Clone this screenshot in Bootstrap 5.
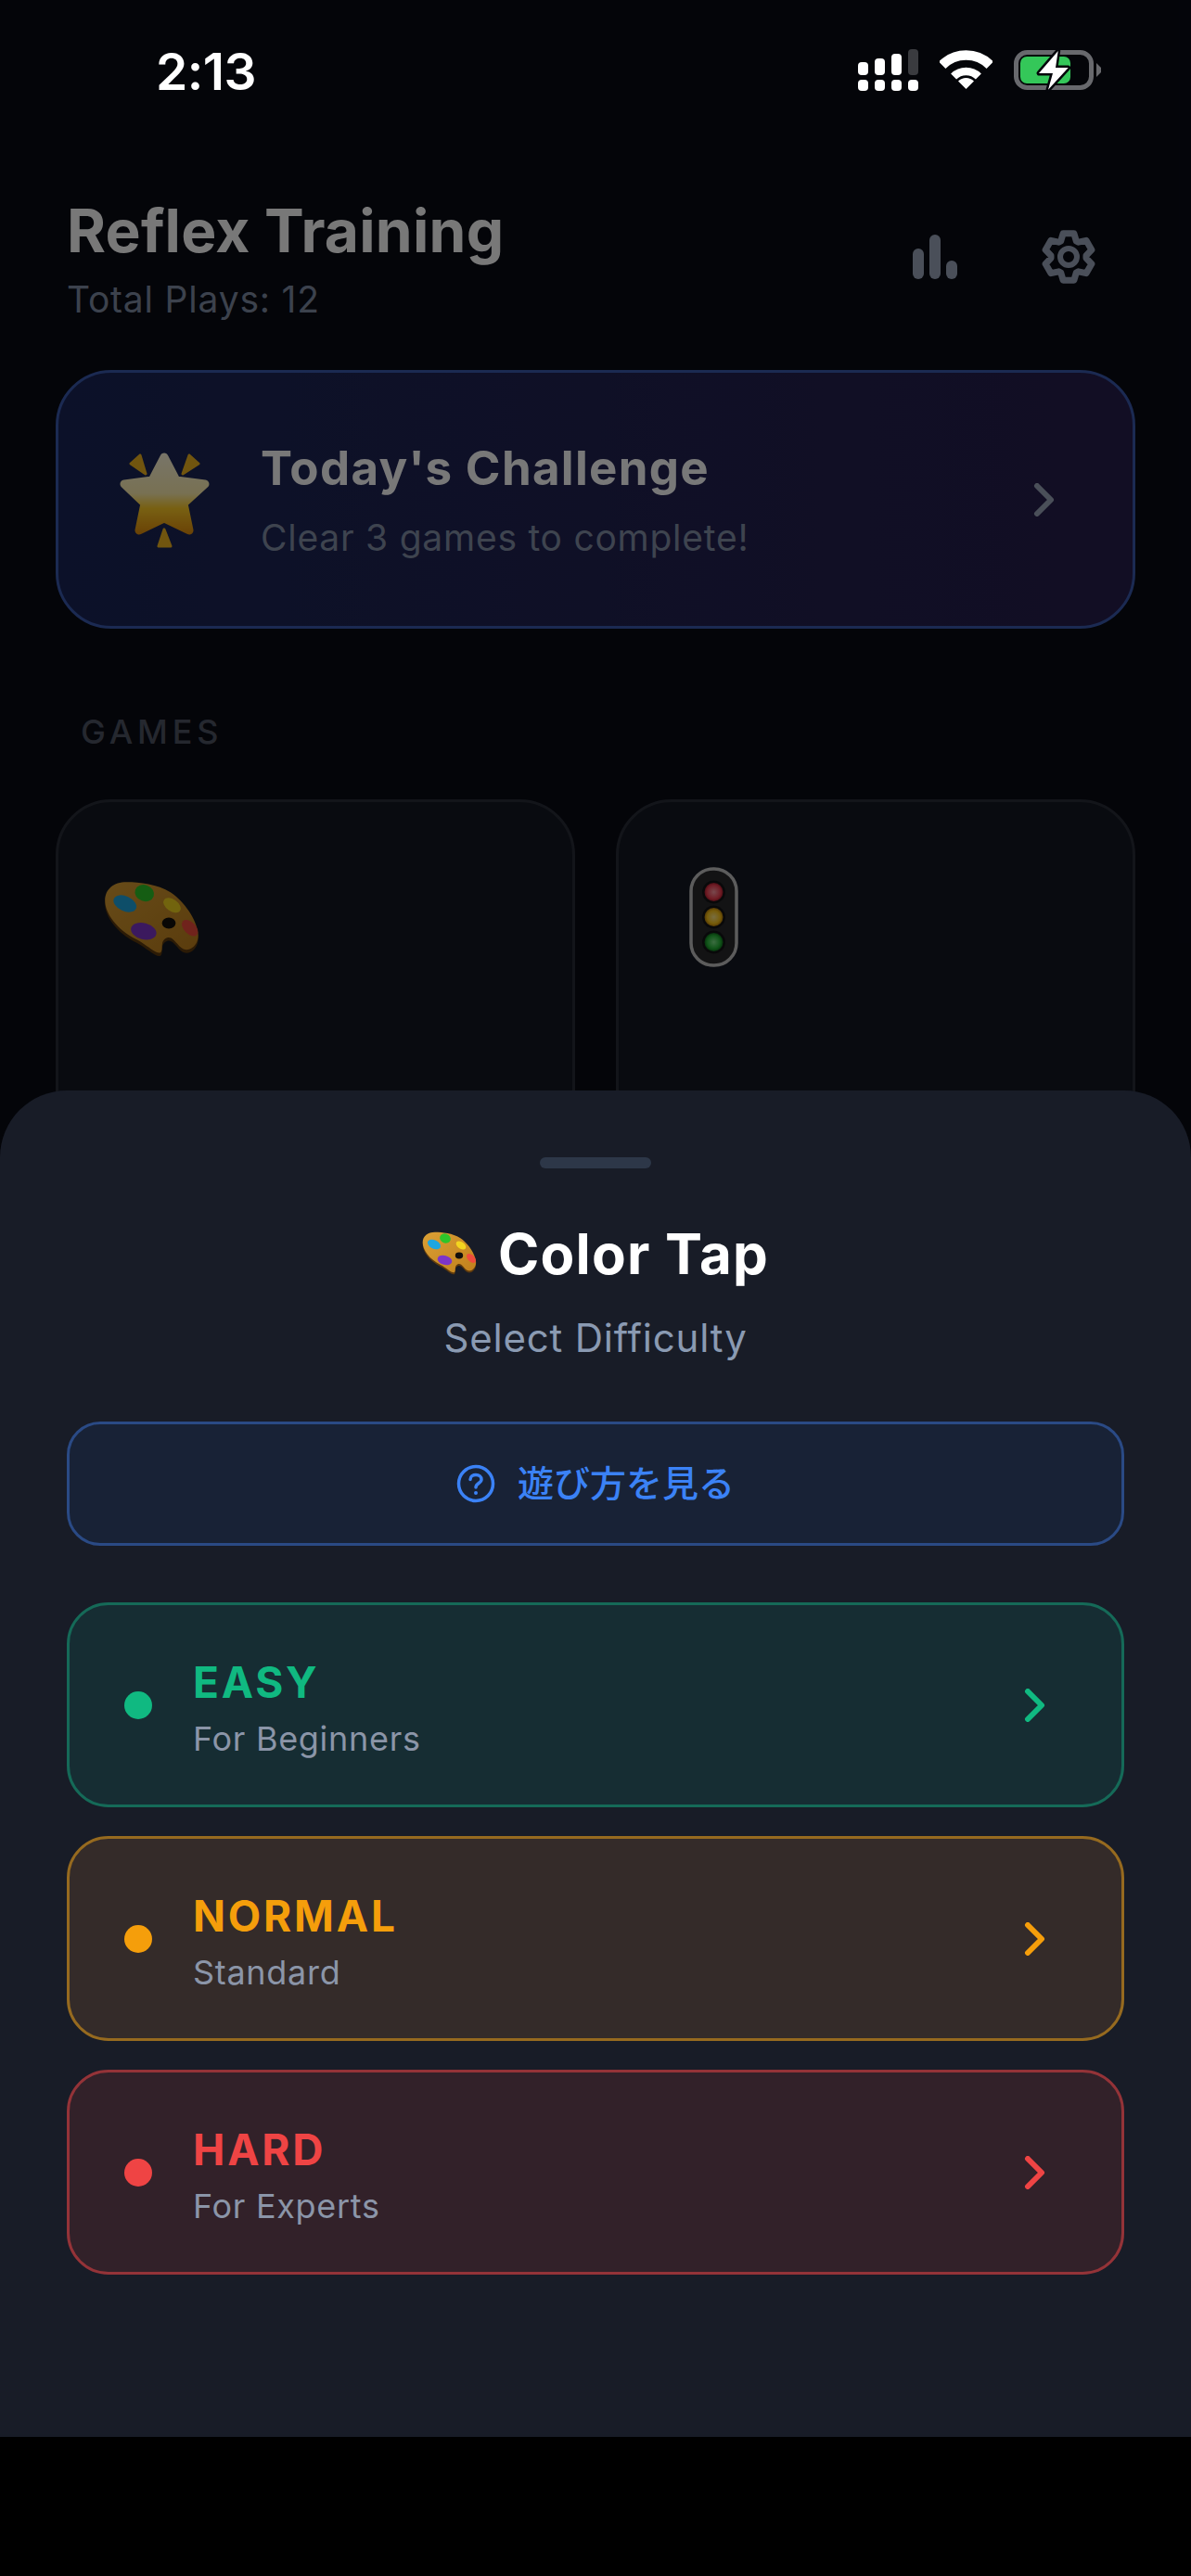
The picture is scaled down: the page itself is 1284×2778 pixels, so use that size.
<!DOCTYPE html>
<html lang="en">
<head>
  <meta charset="UTF-8" />
  <meta name="viewport" content="width=device-width, initial-scale=1.0"/>
  <title>Reflex Training</title>

  <link href="https://cdn.jsdelivr.net/npm/bootstrap@5.3.3/dist/css/bootstrap.min.css" rel="stylesheet" />

  <style>
    body {
      margin: 0;
      background: #000;
      font-family: "Inter", "Noto Sans CJK JP", sans-serif;
    }

    .phone {
      position: relative;
      height: 2628px;
      overflow: hidden;
      background: #090b15;
    }

    .status-row {
      position: relative;
      z-index: 3;
      height: 150px;
      padding: 44px 97px 0 168px;
      color: #fff;
    }
    .clock { font-size: 55px; font-weight: 600; line-height: 66px; letter-spacing: -.5px; }

    .app-head { padding: 63px 102px 0 72px; }
    .app-title { font-size: 64px; font-weight: 700; line-height: 72px; color: #fff; margin: 0; letter-spacing: .25px; }
    .app-plays { font-size: 39px; line-height: 46px; color: #808da4; letter-spacing: .8px; margin-top: 15px; }
    .head-icons { gap: 90px; margin-top: 34px; }

    .challenge {
      margin: 53px 60px 0;
      height: 279px;
      border: 3px solid #3b5aae;
      border-radius: 60px;
      background: linear-gradient(90deg, #1a2657, #281e4d);
      padding: 0 83px 0 66px;
    }
    .challenge-name { font-size: 51px; font-weight: 700; line-height: 60px; color: #fff; letter-spacing: 1.3px; }
    .challenge-sub { font-size: 39px; line-height: 46px; color: #8590a8; letter-spacing: .75px; margin-top: 22px; }

    .games-label { font-size: 36px; line-height: 44px; color: #4f5564; letter-spacing: 4.8px; padding: 89px 0 0 87px; font-weight: 500; }

    .games-grid { margin: 51px 60px 0; gap: 44px; }
    .game-tile {
      --bs-card-bg: #151923;
      --bs-card-border-color: #2a2e38;
      --bs-card-border-width: 3px;
      --bs-card-border-radius: 60px;
      height: 600px;
    }
    .tile-palette { margin: 85px 0 0 49px; }
    .tile-light { margin: 70px 0 0 76px; }

    .dim {
      position: absolute;
      inset: 0;
      z-index: 1;
      background: rgba(0, 0, 0, .53);
    }

    .sheet {
      position: absolute;
      left: 0;
      right: 0;
      bottom: 0;
      z-index: 2;
      height: 1452px;
      background: #181c27;
      border-radius: 72px 72px 0 0;
      padding: 72px 72px 0;
    }
    .grip { width: 120px; height: 12px; border-radius: 6px; background: #2d3748; }
    .sheet-title { font-size: 60px; font-weight: 700; line-height: 72px; color: #fff; gap: 22px; margin-top: 56px; letter-spacing: 1.2px; }
    .sheet-sub { font-size: 42px; line-height: 52px; color: #8a9ab2; letter-spacing: .8px; margin-top: 29px; }

    .how-btn {
      --bs-btn-bg: #182236;
      --bs-btn-border-color: #2a4a85;
      --bs-btn-color: #3b82f6;
      --bs-btn-border-width: 3px;
      --bs-btn-border-radius: 36px;
      height: 134px;
      margin-top: 64px;
      font-size: 39px;
      font-weight: 500;
      gap: 24px;
    }

    .level-list { gap: 31px; margin-top: 61px; }
    .level-btn {
      --bs-btn-border-width: 3px;
      --bs-btn-border-radius: 45px;
      height: 221px;
      padding: 4px 81px 0 59px;
      text-align: left;
    }
    .level-easy { --bs-btn-bg: #162d33; --bs-btn-border-color: #156a58; --bs-btn-color: #10b981; }
    .level-normal { --bs-btn-bg: #342b29; --bs-btn-border-color: #966a1f; --bs-btn-color: #f59e0b; }
    .level-hard { --bs-btn-bg: #322129; --bs-btn-border-color: #943338; --bs-btn-color: #ef4444; }
    .level-dot { width: 30px; height: 30px; border-radius: 50%; background: currentColor; margin: -4px 44px 0 0; }
    .level-name { font-size: 46px; font-weight: 700; line-height: 58px; letter-spacing: 2.8px; }
    .level-note { font-size: 36px; line-height: 44px; color: #8b95a8; letter-spacing: .7px; margin-top: 10px; }
    .level-btn svg { margin-top: -4px; }
  </style>
</head>
<body>

  <!-- shared palette emoji -->
  <svg width="0" height="0" class="position-absolute">
    <defs>
      <linearGradient id="wood" x1="0" y1="0" x2="1" y2="1">
        <stop offset="0" stop-color="#dba035"/>
        <stop offset="1" stop-color="#c0801c"/>
      </linearGradient>
      <linearGradient id="starFill" gradientUnits="userSpaceOnUse" x1="48" y1="0" x2="48" y2="90">
        <stop offset="0" stop-color="#fff8e0"/>
        <stop offset=".5" stop-color="#fff0b0"/>
        <stop offset=".68" stop-color="#ffcd28"/>
        <stop offset="1" stop-color="#e08a0c"/>
      </linearGradient>
      <radialGradient id="lampRed"><stop offset="0" stop-color="#ff9aa4"/><stop offset=".75" stop-color="#ee3d4f"/><stop offset="1" stop-color="#a81c2c"/></radialGradient>
      <radialGradient id="lampAmber"><stop offset="0" stop-color="#ffe98a"/><stop offset=".7" stop-color="#fcc417"/><stop offset="1" stop-color="#b87d08"/></radialGradient>
      <radialGradient id="lampGreen"><stop offset="0" stop-color="#7fe88a"/><stop offset=".7" stop-color="#25b536"/><stop offset="1" stop-color="#0f6e1c"/></radialGradient>
      <symbol id="palette" viewBox="0 0 60 48">
        <path d="M14 2.6C6 2.6.7 7 .7 14C.7 22 8 32 20 38C26 41 33 48 35 46C37 44 34 39 39 37C43 36 45 42 49 44C54 46 59 40 58 34C57 26 50 15 41 9C33 4 22 2.6 14 2.6Z" fill="#5e3a0e"/>
        <path d="M14 .7C6 .7 .7 5 .7 12C.7 20 8 30 20 36C26 39 33 46 35 44C37 42 34 37 39 35C43 34 45 40 49 42C54 44 59 38 58 32C57 24 50 13 41 7C33 2 22 .7 14 .7Z" fill="url(#wood)"/>
        <ellipse cx="25" cy="7.5" rx="6" ry="5" fill="#2ec52a" transform="rotate(20 25 7.5)"/>
        <ellipse cx="13" cy="14" rx="7.5" ry="4.6" fill="#1fa6e0" transform="rotate(25 13 14)"/>
        <ellipse cx="42" cy="15" rx="6" ry="3.6" fill="#f3d51f" transform="rotate(35 42 15)"/>
        <ellipse cx="24.5" cy="31" rx="8" ry="5" fill="#7d35c8" transform="rotate(15 24.5 31)"/>
        <ellipse cx="53" cy="29" rx="6" ry="3.6" fill="#ef4b3c" transform="rotate(45 53 29)"/>
        <ellipse cx="40" cy="26" rx="4.2" ry="3.4" fill="#14100c"/>
      </symbol>
    </defs>
  </svg>

  <div class="phone">

    <!-- Status bar -->
    <div class="status-row d-flex justify-content-between align-items-start">
      <div class="clock">2:13</div>
      <div class="d-flex align-items-start">
        <svg width="66" height="46" viewBox="0 0 66 46" style="margin:9px 22px 0 0">
          <g fill="#fff">
            <rect x="0" y="14" width="11" height="14" rx="4"/>
            <rect x="18" y="10" width="11" height="18" rx="4"/>
            <rect x="36" y="5" width="11" height="23" rx="4"/>
            <rect x="0" y="33" width="11" height="12" rx="4"/>
            <rect x="18" y="33" width="11" height="12" rx="4"/>
            <rect x="36" y="33" width="11" height="12" rx="4"/>
            <rect x="54" y="33" width="11" height="12" rx="4"/>
          </g>
          <rect x="54" y="0" width="11" height="28" rx="4" fill="#3a3b3f"/>
        </svg>
        <svg width="57" height="42" viewBox="0 0 57 42" style="margin-top:10px">
          <g fill="none" stroke="#fff">
            <path d="M2.7 16.2A36.5 36.5 0 0 1 54.3 16.2" stroke-width="10.5"/>
            <path d="M15.1 28.6A19 19 0 0 1 41.9 28.6" stroke-width="8.5"/>
          </g>
          <path d="M28.5 42L20 33.5A12 12 0 0 1 37 33.5Z" fill="#fff"/>
        </svg>
        <svg width="100" height="52" viewBox="0 0 100 52" style="margin:6px -3px 0 20px">
          <rect x="5.5" y="6.5" width="81" height="38" rx="12" fill="none" stroke="#68696d" stroke-width="5"/>
          <rect x="10" y="11" width="54" height="29" rx="7" fill="#34c759"/>
          <path d="M92 18L97 23V28L92 33Z" fill="#68696d"/>
          <path d="M50.7 5L30 29H45L40 46.7L61.7 23H48Z" fill="#fff" stroke="#04050a" stroke-width="5" paint-order="stroke" stroke-linejoin="round"/>
        </svg>
      </div>
    </div>

    <!-- Main screen, dimmed behind the sheet -->
    <div class="app-head d-flex justify-content-between align-items-start">
      <div>
        <h1 class="app-title">Reflex Training</h1>
        <div class="app-plays">Total Plays: 12</div>
      </div>
      <div class="head-icons d-flex align-items-center">
        <svg width="48" height="48" viewBox="0 0 48 48" fill="#9ea9bd">
          <rect x="0" y="15" width="12" height="33" rx="6"/>
          <rect x="18" y="0" width="12" height="48" rx="6"/>
          <rect x="36" y="28" width="12" height="20" rx="6"/>
        </svg>
        <svg width="60" height="60" viewBox="0 0 60 60" fill="none" stroke="#9ea9bd">
          <polygon stroke-width="7" stroke-linejoin="round" points="24.15,4.7 35.85,4.7 38.3,12.9 40.6,14.2 49,12.3 54.9,22.4 49,28.7 49,31.3 54.9,37.6 49,47.7 40.6,45.8 38.3,47.1 35.85,55.3 24.15,55.3 21.7,47.1 19.4,45.8 11,47.7 5.1,37.6 11,31.3 11,28.7 5.1,22.4 11,12.3 19.4,14.2 21.7,12.9"/>
          <circle cx="30" cy="30" r="9" stroke-width="6"/>
        </svg>
      </div>
    </div>

    <div class="challenge d-flex align-items-center">
      <svg width="97" height="104" viewBox="0 0 97 104" class="flex-shrink-0" style="margin-right:55px">
        <path d="M22 4L12 13L28 24Z M75 4L85 13L68 24Z M48 84L42 102H55Z" fill="#f0b420" stroke="#f0b420" stroke-width="3" stroke-linejoin="round"/>
        <path d="M48 6L35 31L5 35L27 56L21 85L48 72L75 85L69 56L92 35L61 31Z" fill="url(#starFill)" stroke="url(#starFill)" stroke-width="9" stroke-linejoin="round"/>
      </svg>
      <div class="flex-grow-1">
        <div class="challenge-name">Today's Challenge</div>
        <div class="challenge-sub">Clear 3 games to complete!</div>
      </div>
      <svg width="24" height="36" viewBox="0 0 24 36" fill="none" stroke="#9ea9bd" stroke-width="6" stroke-linecap="round" stroke-linejoin="round">
        <path d="M4 3L19 18L4 33"/>
      </svg>
    </div>

    <div class="games-label">GAMES</div>

    <div class="games-grid d-flex">
      <div class="card game-tile flex-fill w-50">
        <svg class="tile-palette" width="105" height="84"><use href="#palette"/></svg>
      </div>
      <div class="card game-tile flex-fill w-50">
        <svg class="tile-light" width="53" height="108" viewBox="0 0 53 108">
          <rect x="2" y="2" width="49" height="104" rx="24" fill="#2a2a2c" stroke="#c4c4c4" stroke-width="3.5"/>
          <circle cx="26.5" cy="27" r="12.5" fill="#141416"/>
          <circle cx="26.5" cy="54" r="12.5" fill="#141416"/>
          <circle cx="26.5" cy="81" r="12.5" fill="#141416"/>
          <circle cx="26.5" cy="27" r="10" fill="url(#lampRed)"/>
          <circle cx="26.5" cy="54" r="10" fill="url(#lampAmber)"/>
          <circle cx="26.5" cy="81" r="10" fill="url(#lampGreen)"/>
        </svg>
      </div>
    </div>

    <div class="dim"></div>

    <!-- Difficulty sheet -->
    <div class="sheet d-flex flex-column">
      <div class="grip mx-auto"></div>
      <div class="sheet-title d-flex justify-content-center align-items-center">
        <svg width="60" height="48"><use href="#palette"/></svg>
        <span>Color Tap</span>
      </div>
      <div class="sheet-sub text-center">Select Difficulty</div>

      <button type="button" class="btn how-btn d-flex justify-content-center align-items-center">
        <svg width="42" height="42" viewBox="0 0 42 42" fill="none" stroke="#3b82f6" stroke-width="3.5" stroke-linecap="round">
          <circle cx="21" cy="21" r="18.5"/>
          <path d="M15 16.5C15 13 18 11.5 21 11.5C24.5 11.5 27 13.5 27 16.5C27 20.5 21 20.5 21 25"/>
          <circle cx="21" cy="31" r="1" fill="#3b82f6" stroke-width="2"/>
        </svg>
        <span>遊び方を見る</span>
      </button>

      <div class="level-list d-flex flex-column">
        <button type="button" class="btn level-btn level-easy d-flex align-items-center">
          <span class="level-dot flex-shrink-0"></span>
          <span class="flex-grow-1 d-block">
            <span class="level-name d-block">EASY</span>
            <span class="level-note d-block">For Beginners</span>
          </span>
          <svg width="24" height="36" viewBox="0 0 24 36" fill="none" stroke="currentColor" stroke-width="6" stroke-linecap="round" stroke-linejoin="round"><path d="M4 3L19 18L4 33"/></svg>
        </button>
        <button type="button" class="btn level-btn level-normal d-flex align-items-center">
          <span class="level-dot flex-shrink-0"></span>
          <span class="flex-grow-1 d-block">
            <span class="level-name d-block">NORMAL</span>
            <span class="level-note d-block">Standard</span>
          </span>
          <svg width="24" height="36" viewBox="0 0 24 36" fill="none" stroke="currentColor" stroke-width="6" stroke-linecap="round" stroke-linejoin="round"><path d="M4 3L19 18L4 33"/></svg>
        </button>
        <button type="button" class="btn level-btn level-hard d-flex align-items-center">
          <span class="level-dot flex-shrink-0"></span>
          <span class="flex-grow-1 d-block">
            <span class="level-name d-block">HARD</span>
            <span class="level-note d-block">For Experts</span>
          </span>
          <svg width="24" height="36" viewBox="0 0 24 36" fill="none" stroke="currentColor" stroke-width="6" stroke-linecap="round" stroke-linejoin="round"><path d="M4 3L19 18L4 33"/></svg>
        </button>
      </div>
    </div>

  </div>

  <script src="https://cdn.jsdelivr.net/npm/bootstrap@5.3.3/dist/js/bootstrap.bundle.min.js"></script>
</body>
</html>
